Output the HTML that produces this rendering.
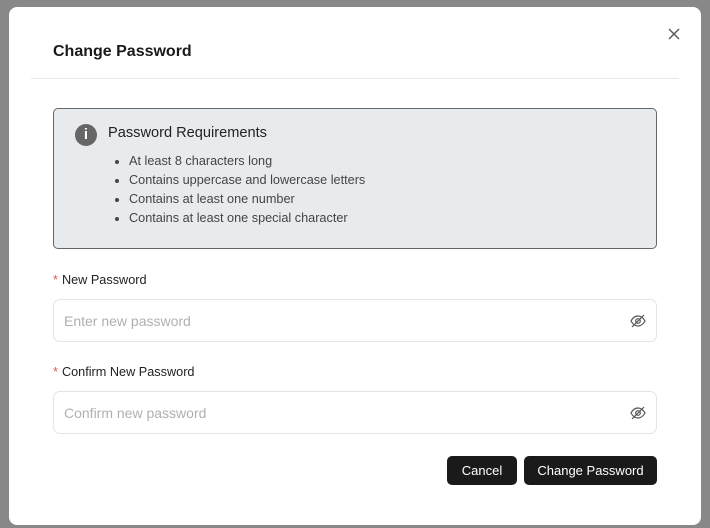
<!DOCTYPE html>
<html><head><style>
*{box-sizing:border-box;margin:0;padding:0}
body{width:710px;height:528px;background:#888;font-family:"Liberation Sans",sans-serif;position:relative;overflow:hidden}
.m{position:absolute;left:9px;top:7px;width:692px;height:518px;background:#fff;border-radius:8px}
.t{position:absolute;left:44px;top:36px;font-size:16px;font-weight:bold;color:#1a1a1a}
.hr{position:absolute;left:22px;top:71px;width:648px;height:1px;background:#e8e8e8}
.x{position:absolute;left:658px;top:20px}
.box{position:absolute;left:44px;top:101px;width:604px;height:141px;background:#e8ebee;border:1px solid #666;border-radius:5px}
.ic{position:absolute;left:21px;top:15px;width:22px;height:22px;border-radius:50%;background:#666;color:#fff;font-weight:bold;font-size:15px;text-align:center;line-height:22px}
.bt{position:absolute;left:54px;top:16px;font-size:14.6px;color:#222}
ul{position:absolute;left:75px;top:43px;font-size:12.7px;color:#444;line-height:19px}
.lb{position:absolute;left:44px;font-size:12.7px;color:#222}
.lb span{color:#e05555;margin-right:4px}
.in{position:absolute;left:44px;width:604px;height:43px;border:1px solid #e2e4e8;border-radius:7px;font-size:14px;color:#b0b0b0;padding:13px 10px}
.in svg{position:absolute;right:10px;top:14px}
.b{position:absolute;top:449px;height:29px;background:#1a1a1a;color:#fff;border-radius:5px;font-size:13px;text-align:center;line-height:29px}
</style></head><body>
<div class="m">
<div class="t">Change Password</div>
<svg class="x" width="14" height="14" viewBox="0 0 14 14"><path d="M2 2L12 12M12 2L2 12" stroke="#555" stroke-width="1.4"/></svg>
<div class="hr"></div>
<div class="box">
<div class="ic">i</div>
<div class="bt">Password Requirements</div>
<ul><li>At least 8 characters long</li><li>Contains uppercase and lowercase letters</li><li>Contains at least one number</li><li>Contains at least one special character</li></ul>
</div>
<div class="lb" style="top:266px"><span>*</span>New Password</div>
<div class="in" style="top:292px">Enter new password<svg width="16" height="14" viewBox="0 0 16 14"><path d="M1 7C3 3.5 5.5 2 8 2S13 3.5 15 7C13 10.5 10.5 12 8 12S3 10.5 1 7Z" fill="none" stroke="#555" stroke-width="1.2"/><circle cx="8" cy="7" r="2.3" fill="none" stroke="#555" stroke-width="1.2"/><path d="M2 13L14 1" stroke="#555" stroke-width="1.2"/></svg></div>
<div class="lb" style="top:358px"><span>*</span>Confirm New Password</div>
<div class="in" style="top:384px">Confirm new password<svg width="16" height="14" viewBox="0 0 16 14"><path d="M1 7C3 3.5 5.5 2 8 2S13 3.5 15 7C13 10.5 10.5 12 8 12S3 10.5 1 7Z" fill="none" stroke="#555" stroke-width="1.2"/><circle cx="8" cy="7" r="2.3" fill="none" stroke="#555" stroke-width="1.2"/><path d="M2 13L14 1" stroke="#555" stroke-width="1.2"/></svg></div>
<div class="b" style="left:438px;width:70px">Cancel</div>
<div class="b" style="left:515px;width:133px">Change Password</div>
</div>
</body></html>
